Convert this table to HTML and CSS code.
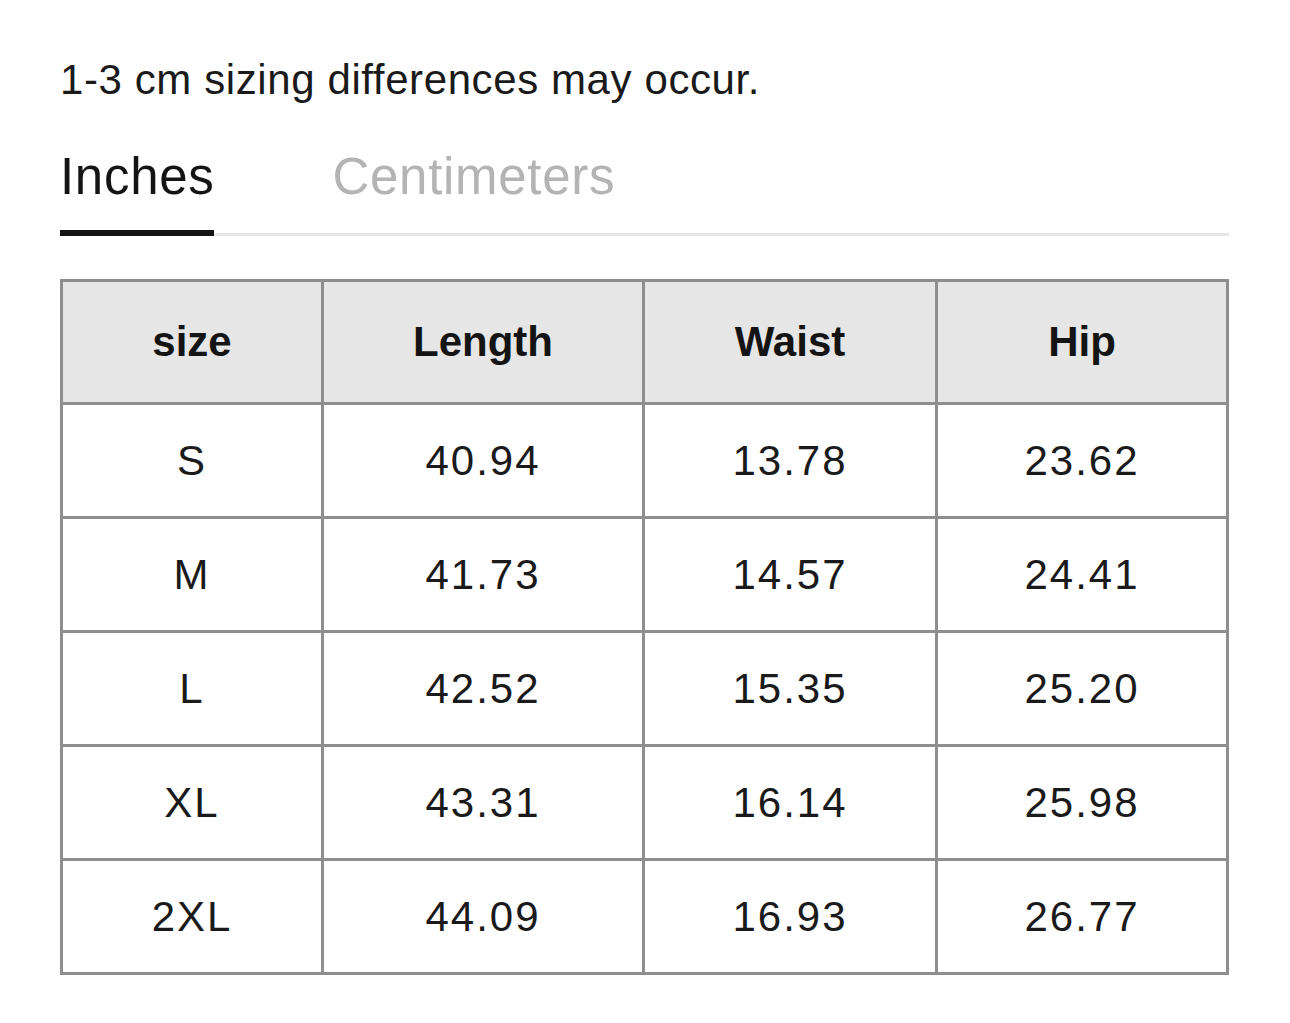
FILE: index.html
```html
<!DOCTYPE html>
<html lang="en">
<head>
<meta charset="utf-8">
<title>Size chart</title>
<link rel="stylesheet" href="styles.css">
</head>
<body>
<main class="page">
  <p class="note">1-3 cm sizing differences may occur.</p>
  <div class="tabs">
    <div class="tab active">Inches</div>
    <div class="tab">Centimeters</div>
  </div>
  <table class="chart">
    <colgroup>
      <col class="c1"><col class="c2"><col class="c3"><col class="c4">
    </colgroup>
    <thead>
      <tr><th>size</th><th>Length</th><th>Waist</th><th>Hip</th></tr>
    </thead>
    <tbody>
      <tr><td>S</td><td>40.94</td><td>13.78</td><td>23.62</td></tr>
      <tr><td>M</td><td>41.73</td><td>14.57</td><td>24.41</td></tr>
      <tr><td>L</td><td>42.52</td><td>15.35</td><td>25.20</td></tr>
      <tr><td>XL</td><td>43.31</td><td>16.14</td><td>25.98</td></tr>
      <tr><td>2XL</td><td>44.09</td><td>16.93</td><td>26.77</td></tr>
    </tbody>
  </table>
</main>
</body>
</html>
```
FILE: styles.css
```css
html, body {
  margin: 0;
  padding: 0;
  background: #ffffff;
}

body {
  font-family: "Liberation Sans", Arial, sans-serif;
  color: #161616;
}

.page {
  width: 1169px;
  padding: 55px 0 0 60px;
}

.note {
  margin: 0;
  font-size: 42px;
  line-height: 50px;
  color: #1a1a1a;
  letter-spacing: 0.6px;
}

.tabs {
  margin-top: 42px;
  height: 86px;
  display: flex;
  align-items: flex-start;
  gap: 118px;
  border-bottom: 3px solid #e6e6e8;
}

.tab {
  font-size: 51px;
  line-height: 60px;
  padding-bottom: 23px;
  color: #b4b4b4;
  letter-spacing: 0.7px;
}

.tab.active {
  color: #141414;
  border-bottom: 6px solid #141414;
  margin-bottom: -3px;
}

.chart {
  margin-top: 43px;
  width: 1169px;
  table-layout: fixed;
  border-collapse: separate;
  border-spacing: 0;
  border-top: 3px solid #8e8e8e;
  border-left: 3px solid #8e8e8e;
}

.c1 { width: 261px; }
.c2 { width: 321px; }
.c3 { width: 293px; }
.c4 { width: 291px; }

.chart th,
.chart td {
  box-sizing: border-box;
  padding: 0;
  text-align: center;
  vertical-align: middle;
  border-right: 3px solid #8e8e8e;
  border-bottom: 3px solid #8e8e8e;
  font-size: 42px;
}

.chart th {
  height: 123px;
  background: #e6e6e6;
  font-weight: 700;
  color: #141414;
}

.chart td {
  height: 114px;
  font-weight: 400;
  color: #1a1a1a;
  letter-spacing: 2px;
}
```
